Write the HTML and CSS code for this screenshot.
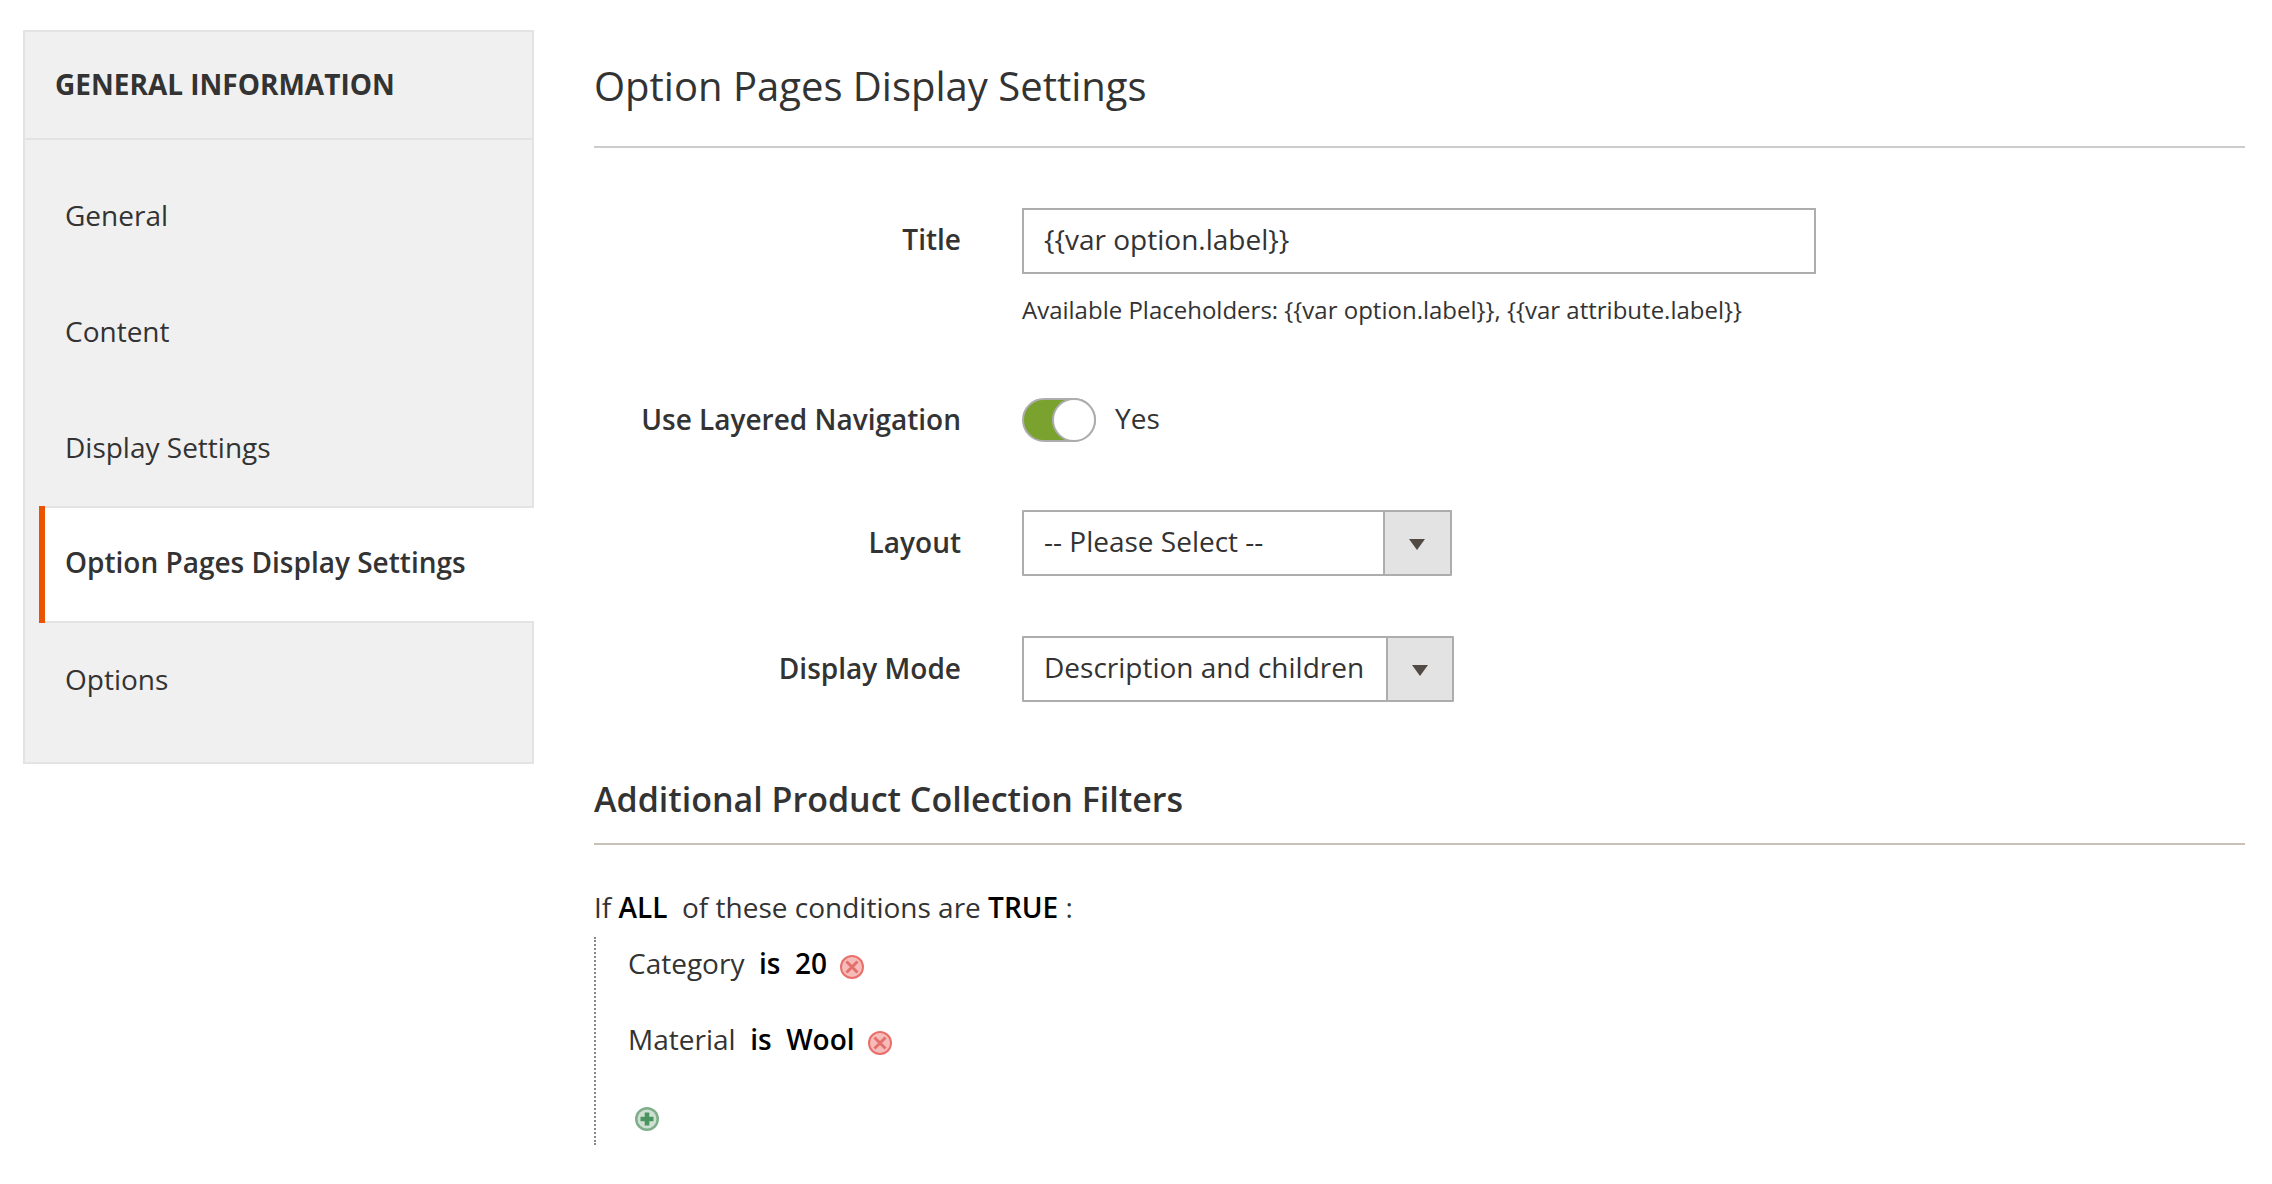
FILE: index.html
```html
<!DOCTYPE html>
<html>
  <head>
    <meta charset="UTF-8">
    <title>Option Pages Display Settings</title>
    <link rel="stylesheet" href="styles.css">
  </head>
  <body>
    <div class="page">
      <div class="sidebar">
        <div class="sidebar-title">GENERAL INFORMATION</div>
        <ul class="tabs">
          <li><a href="#general">General</a></li>
          <li><a href="#content">Content</a></li>
          <li><a href="#display">Display Settings</a></li>
          <li class="active"><a href="#option-pages">Option Pages Display Settings</a></li>
          <li><a href="#options">Options</a></li>
        </ul>
      </div>
      <div class="main">
        <h1 class="page-title">Option Pages Display Settings</h1>

        <div class="field field-title">
          <label>Title</label>
          <div class="control">
            <input type="text" class="text-input" value="{{var option.label}}">
            <p class="note">Available Placeholders: {{var option.label}}, {{var attribute.label}}</p>
          </div>
        </div>

        <div class="field field-toggle">
          <label>Use Layered Navigation</label>
          <div class="control toggle-row">
            <span class="toggle"><span class="toggle-knob"></span></span>
            <span class="toggle-text">Yes</span>
          </div>
        </div>

        <div class="field field-layout">
          <label>Layout</label>
          <div class="control">
            <div class="select select-layout">
              <span class="select-value">-- Please Select --</span>
              <span class="select-arrow"></span>
            </div>
          </div>
        </div>

        <div class="field field-mode">
          <label>Display Mode</label>
          <div class="control">
            <div class="select select-mode">
              <span class="select-value">Description and children</span>
              <span class="select-arrow"></span>
            </div>
          </div>
        </div>

        <h2 class="section-title">Additional Product Collection Filters</h2>

        <div class="rule-head">If <b>ALL</b>&nbsp; of these conditions are <b>TRUE</b> :</div>
        <ul class="rules">
          <li>Category&nbsp; <b>is</b>&nbsp; <b>20</b>
            <svg class="rule-icon" viewBox="0 0 26 26">
              <defs>
                <filter id="soft"><feGaussianBlur stdDeviation="0.7"/></filter>
              </defs>
              <g filter="url(#soft)">
                <circle cx="13" cy="13" r="12" fill="#e96f6b"/>
                <circle cx="13" cy="13" r="10" fill="#f6bcba"/>
                <path d="M7.5 7.5l11 11M18.5 7.5l-11 11" stroke="#e4706c" stroke-width="3"/>
              </g>
            </svg>
          </li>
          <li>Material&nbsp; <b>is</b>&nbsp; <b>Wool</b>
            <svg class="rule-icon" viewBox="0 0 26 26">
              <g filter="url(#soft)">
                <circle cx="13" cy="13" r="12" fill="#e96f6b"/>
                <circle cx="13" cy="13" r="10" fill="#f6bcba"/>
                <path d="M7.5 7.5l11 11M18.5 7.5l-11 11" stroke="#e4706c" stroke-width="3"/>
              </g>
            </svg>
          </li>
          <li class="rule-add">
            <svg class="rule-icon" viewBox="0 0 26 26">
              <g filter="url(#soft)">
                <circle cx="13" cy="13" r="12" fill="#7fae8a"/>
                <circle cx="13" cy="13" r="9.5" fill="#cfe0d3"/>
                <path d="M13 6.5v13M6.5 13h13" stroke="#4a9560" stroke-width="4.6"/>
              </g>
            </svg>
          </li>
        </ul>
      </div>
    </div>
  </body>
</html>
```

FILE: styles.css
```css
/* Page frame */
body {
  margin: 0;
  background: #fff;
  color: #333;
  font-family: "Open Sans", sans-serif;
  font-size: 28px;
}

.page {
  display: flex;
  padding: 30px 27px 0 23px;
  align-items: flex-start;
}

/* Left tabs */
.sidebar {
  width: 511px;
  box-sizing: border-box;
  flex-shrink: 0;
  height: 734px;
  background: #f0f0f0;
  border: 2px solid #e3e3e3;
}

.sidebar-title {
  height: 108px;
  box-sizing: border-box;
  padding: 33px 0 0 30px;
  border-bottom: 2px solid #e3e3e3;
  line-height: 38px;
  font-weight: 700;
}

.tabs {
  list-style-type: none;
  margin: 0;
  padding: 18px 0 0 0;
}

.tabs li {
  height: 116px;
  margin-left: 14px;
  margin-right: -2px;
}

.tabs li a {
  display: block;
  padding-left: 26px;
  line-height: 114px;
  color: #333;
  text-decoration: none;
  white-space: nowrap;
}

.tabs li.active {
  position: relative;
  box-sizing: border-box;
  height: 117px;
  margin-bottom: -1px;
  background: #fff;
  border-top: 2px solid #e3e3e3;
  border-bottom: 2px solid #e3e3e3;
  font-weight: 600;
}

.tabs li.active::before {
  content: "";
  position: absolute;
  top: -2px;
  bottom: -2px;
  left: 0;
  width: 6px;
  background: #eb5202;
}

.tabs li.active a {
  line-height: 109px;
}

/* Form */
.main {
  flex: 1;
  margin-left: 60px;
}

.page-title {
  margin: 0;
  height: 118px;
  box-sizing: border-box;
  padding-top: 27px;
  font-size: 40px;
  line-height: 58px;
  font-weight: 400;
  border-bottom: 2px solid #ccc;
}

.field {
  display: flex;
}

.field label {
  width: 367px;
  flex-shrink: 0;
  text-align: right;
  font-weight: 600;
  margin-right: 61px;
}

.field-title { margin-top: 60px; }
.field-title label { line-height: 63px; }
.field-toggle { margin-top: 72px; }
.field-toggle label { line-height: 42px; }
.field-layout { margin-top: 68px; }
.field-layout label { line-height: 64px; }
.field-mode { margin-top: 60px; }
.field-mode label { line-height: 64px; }

.text-input {
  display: block;
  width: 794px;
  height: 66px;
  box-sizing: border-box;
  padding: 0 20px 4px;
  border: 2px solid #adadad;
  font-family: "Open Sans", sans-serif;
  font-size: 28px;
  color: #333;
  outline: none;
}

.note {
  margin: 20px 0 0 0;
  font-size: 24px;
  line-height: 32px;
}

/* Toggle */
.toggle-row {
  display: flex;
  align-items: flex-start;
}

.toggle {
  display: block;
  position: relative;
  width: 74px;
  height: 44px;
  box-sizing: border-box;
  background: #79a22e;
  border: 2px solid #adadad;
  border-radius: 22px;
}

.toggle-knob {
  position: absolute;
  top: -2px;
  right: -2px;
  width: 44px;
  height: 44px;
  box-sizing: border-box;
  background: #fff;
  border: 2px solid #adadad;
  border-radius: 50%;
}

.toggle-text {
  margin-left: 19px;
  line-height: 41px;
}

/* Selects */
.select {
  display: flex;
  box-sizing: border-box;
  height: 66px;
  border: 2px solid #adadad;
  border-radius: 1px;
  line-height: 58px;
}

.select-layout { width: 430px; }
.select-mode { width: 432px; }

.select-value {
  flex: 1;
  padding-left: 20px;
}

.select-arrow {
  position: relative;
  width: 65px;
  background: #e3e3e3;
  border-left: 2px solid #adadad;
}

.select-mode .select-arrow { width: 64px; }

.select-arrow::after {
  content: "";
  position: absolute;
  top: 27px;
  left: 24px;
  border-top: 11px solid #514943;
  border-left: 8px solid transparent;
  border-right: 8px solid transparent;
}

/* Conditions */
.section-title {
  margin: 76px 0 0 0;
  height: 65px;
  font-size: 34px;
  line-height: 42px;
  font-weight: 600;
  border-bottom: 2px solid #c9c0b8;
}

.rule-head {
  margin-top: 42px;
  line-height: 40px;
}

.rule-head b,
.rules b {
  color: #000;
  font-weight: 600;
}

.rules {
  list-style-type: none;
  margin: 10px 0 0 0;
  padding: 8px 0 0 32px;
  border-left: 2px dotted #888;
  height: 200px;
}

.rules li {
  height: 76px;
  line-height: 36px;
}

.rule-icon {
  width: 26px;
  height: 26px;
  margin-left: 5px;
  vertical-align: -6px;
}

.rule-add .rule-icon {
  display: block;
  margin-left: 6px;
  margin-top: 9px;
}
```
